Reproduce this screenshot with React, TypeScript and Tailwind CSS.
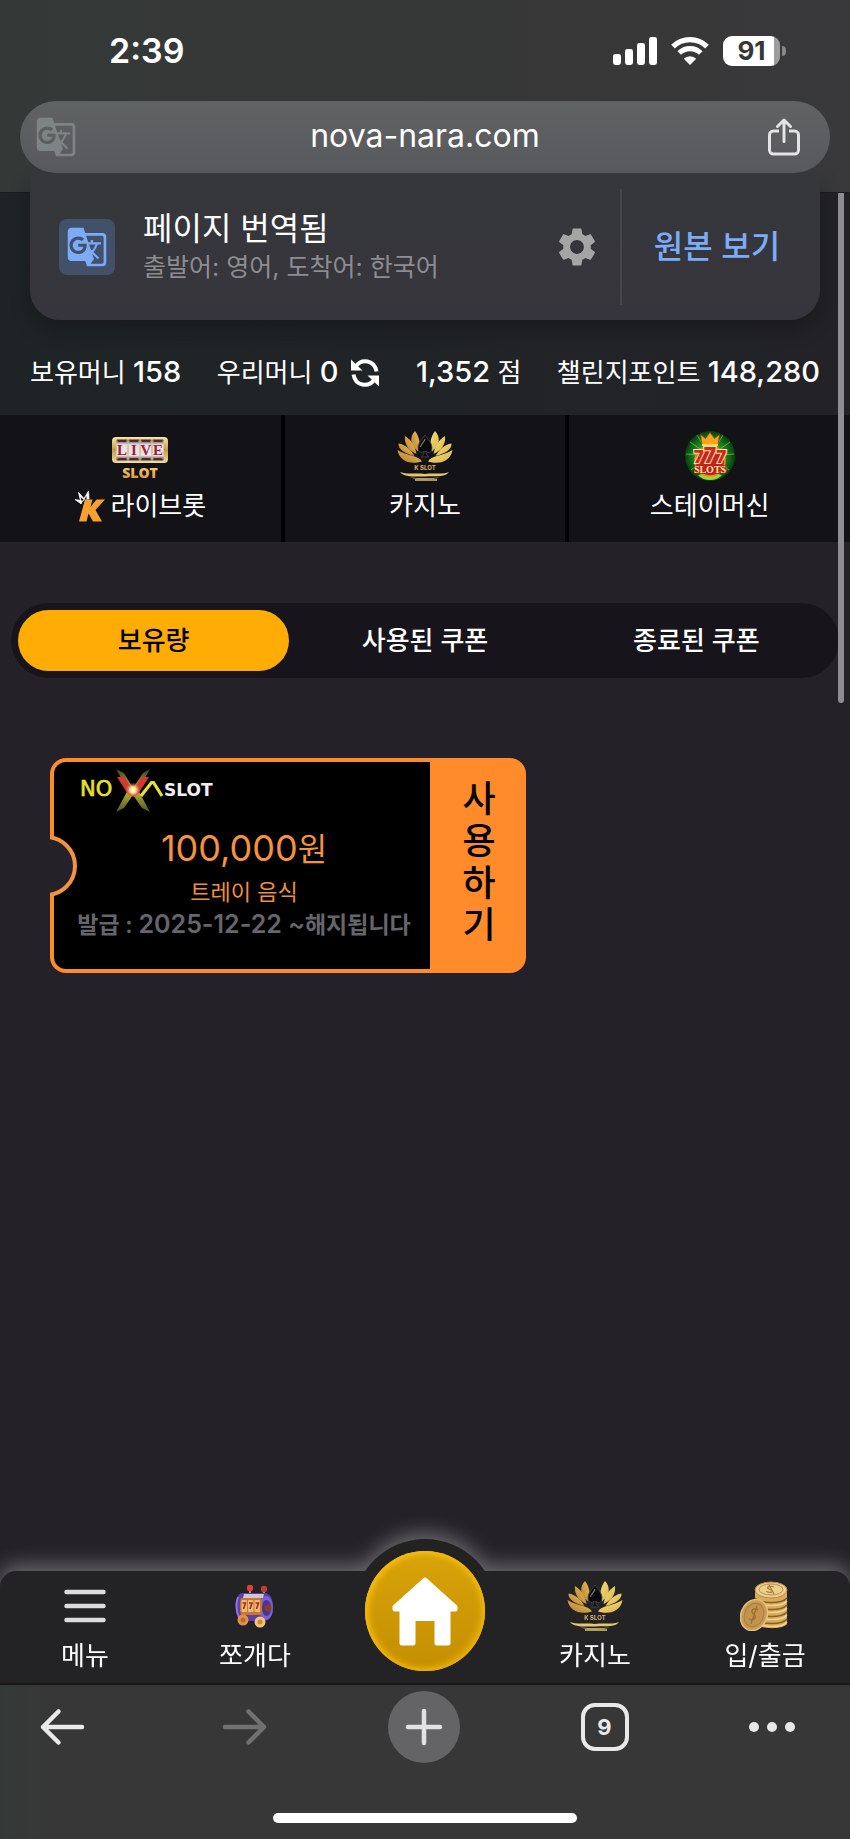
import { useId, useState } from 'react';
import type { ReactNode } from 'react';
import { MdGTranslate, MdSettings } from 'react-icons/md';

function SignalIcon() {
  return (
    <svg width="44" height="28" viewBox="0 0 44 28" fill="#fff" aria-hidden="true">
      <rect x="0" y="17" width="8" height="11" rx="2.4" />
      <rect x="12" y="12" width="8" height="16" rx="2.4" />
      <rect x="24" y="6" width="8" height="22" rx="2.4" />
      <rect x="36" y="0" width="8" height="28" rx="2.4" />
    </svg>
  );
}

function WifiIcon() {
  return (
    <svg width="38" height="28" viewBox="0 0 38 28" fill="none" stroke="#fff" strokeWidth="5.2" aria-hidden="true">
      <path d="M2 9.6a24.2 24.2 0 0 1 34 0" />
      <path d="M8.2 16a15.4 15.4 0 0 1 21.6 0" />
      <path d="M19 28l-6.2-6.3a8.8 8.8 0 0 1 12.4 0z" fill="#fff" stroke="none" />
    </svg>
  );
}

function ShareIcon() {
  return (
    <svg width="32" height="38" viewBox="0 0 32 38" fill="none" stroke="#e4e4e5" strokeWidth="3" strokeLinecap="round" strokeLinejoin="round" aria-hidden="true">
      <path d="M11 13H5.500a4 4 0 0 0-4 4v15a4 4 0 0 0 4 4h21a4 4 0 0 0 4-4V17a4 4 0 0 0-4-4H21" strokeLinecap="butt" />
      <path d="M16 23.500V2.500M9.500 8.500L16 2l6.500 6.500" />
    </svg>
  );
}

function RefreshIcon() {
  return (
    <svg width="30" height="28" viewBox="0 0 30 28" fill="none" stroke="#fff" strokeWidth="4" aria-hidden="true">
      <path d="M6 7C11.500-.5 24.500.5 26.500 12.500" />
      <path d="M24 21C18.500 28.500 5.500 27.500 3.500 15.500" />
      <path d="M1 .5V11.500h11.500z" fill="#fff" stroke="none" />
      <path d="M29 27.500V16.500H17.500z" fill="#fff" stroke="none" />
    </svg>
  );
}

function LotusIcon() {
  const id = useId();
  const petals = (
    <>
      <path d="M38 0c5.500 6 5.500 13-3 20.500-3-7-1.500-14.500 3-20.500z" />
      <path d="M48 5c1 8-3.500 14.500-11.500 18C38 15 42 8.500 48 5z" />
      <path d="M54.500 12.500c.5 5.500-6 10-16 12.500 3.500-6.500 9-11.500 16-12.500z" />
      <path d="M55.500 19C54 29 44 34.500 31 30.500 34 24.500 46 25 55.500 19z" />
    </>
  );
  return (
    <svg width="56" height="50" viewBox="0 0 56 50" aria-hidden="true">
      <defs>
        <linearGradient id={`${id}l`} x1="0" y1="0" x2="1" y2="1">
          <stop offset="0" stopColor="#f3dc7a" />
          <stop offset="1" stopColor="#dcb54a" />
        </linearGradient>
        <linearGradient id={`${id}d`} x1="0" y1="0" x2="1" y2="1">
          <stop offset="0" stopColor="#eac05c" />
          <stop offset="1" stopColor="#b47d2c" />
        </linearGradient>
      </defs>
      <g fill={`url(#${id}l)`}>{petals}</g>
      <g fill={`url(#${id}d)`} transform="matrix(-1 0 0 1 56 0)">{petals}</g>
      <path d="M28 4c3 5 7 7.500 7 13 0 5-4.500 5.500-6.200 3 .2 3 1.200 4.500 2.800 6h-7.200c1.600-1.500 2.600-3 2.800-6-1.700 2.500-6.200 2-6.200-3C21 11.500 25 9 28 4z" fill="#0b0b0e" stroke="#4b4b52" strokeWidth=".8" />
      <path d="M28 8c-1 4-4.500 5-4.500 8" fill="none" stroke="#77777f" strokeWidth="1.200" />
      <text x="28" y="39" textAnchor="middle" fontSize="6" fontWeight="700" fill="#e0b56a" className="font-['Inter',sans-serif]">K SLOT</text>
      <path d="M3 41c8 3 14 .5 25 2 10-1.500 17 1 24-2-3 5-12 4-24 4.500C15 45.500 7 46 3 41z" fill="#e6c86c" />
      <path d="M13 46.500c9 1 21 1 30 0-8 2-21 2.500-30 0z" fill="#e6c86c" />
      <path d="M18 49h22" stroke="#f2e08d" strokeWidth="1.300" />
    </svg>
  );
}

function LiveSlotIcon() {
  return (
    <svg width="56" height="54" viewBox="0 -8 56 54" aria-hidden="true">
      <defs>
        <linearGradient id="liveGold" x1="0" y1="0" x2="0" y2="1">
          <stop offset="0" stopColor="#f7e9a5" />
          <stop offset=".5" stopColor="#c69a45" />
          <stop offset="1" stopColor="#efe09a" />
        </linearGradient>
        <linearGradient id="liveReel" x1="0" y1="0" x2="0" y2="1">
          <stop offset="0" stopColor="#3a3537" />
          <stop offset=".25" stopColor="#e6e0e2" />
          <stop offset=".75" stopColor="#ece6e8" />
          <stop offset="1" stopColor="#3a3537" />
        </linearGradient>
        <linearGradient id="slotGold" x1="0" y1="0" x2="0" y2="1">
          <stop offset="0" stopColor="#fbe27e" />
          <stop offset="1" stopColor="#dc8b38" />
        </linearGradient>
      </defs>
      <rect width="56" height="26" rx="4" fill="url(#liveGold)" />
      {['L', 'I', 'V', 'E'].map((letter, i) => (
        <g key={letter}>
          <rect x={4.5 + i * 12} y="2.500" width="11" height="21" fill="url(#liveReel)" />
          <path d={`M${6 + i * 12} 4h8M${6 + i * 12} 22h8`} stroke="#5a2633" strokeWidth="2" />
          <text x={10 + i * 12} y="18" textAnchor="middle" fontSize="15" fontWeight="700" fill="#96213f" className="font-['Liberation_Serif',serif]">{letter}</text>
        </g>
      ))}
      <text x="28" y="41" textAnchor="middle" fontSize="14" fontWeight="800" fill="url(#slotGold)" className="font-['Open_Sans',sans-serif]">SLOT</text>
    </svg>
  );
}

function SevensIcon() {
  return (
    <svg width="52" height="52" viewBox="0 0 52 52" aria-hidden="true">
      <defs>
        <radialGradient id="greenBall">
          <stop offset="0" stopColor="#b6e34a" />
          <stop offset=".55" stopColor="#1f9024" />
          <stop offset="1" stopColor="#06400f" />
        </radialGradient>
      </defs>
      <circle cx="26" cy="26" r="25" fill="url(#greenBall)" />
      <g stroke="#7fd23f" strokeWidth="1" opacity=".7">
        <path d="M26 26L6 12M26 26L2 24M26 26L46 12M26 26L50 24M26 26L13 5M26 26L39 5M26 26L7 40M26 26L45 40" />
      </g>
      <path d="M14 45q12-4 24 0-4 5-12 5t-12-5z" fill="#9ad63a" />
      <circle cx="26" cy="31" r="15" fill="#c0261a" stroke="#f08a24" strokeWidth="1.500" />
      <path d="M18 15L16.500 4.500l5 4L26 2.500l4.500 6 5-4L34 15z" fill="#f6a51d" stroke="#8d4a08" strokeWidth=".8" />
      <path d="M18 15h16" stroke="#ffd84c" strokeWidth="2" />
      <text x="26" y="33" textAnchor="middle" fontSize="17" fontWeight="900" fill="#d5281c" stroke="#ffe9b0" strokeWidth="2" paintOrder="stroke" className="font-['Inter',sans-serif]">
        7<tspan fontSize="21">7</tspan>7
      </text>
      <text x="26" y="43" textAnchor="middle" fontSize="10" fontWeight="700" fill="#ffe7a6" stroke="#b01f14" strokeWidth="1.600" paintOrder="stroke" className="font-['Liberation_Serif',serif]">SLOTS</text>
    </svg>
  );
}

function CrownKIcon() {
  return (
    <svg width="32" height="32" viewBox="0 0 32 32" aria-hidden="true">
      <path d="M11 9.500h7.500L16.500 17 22.500 9.500H31L21.500 20 28 31.500h-9l-4.500-8-2 8H5z" fill="#f6a02d" />
      <path d="M6 13L1 9.500l5.500 1L4.500 2.500l5.500 6L14.500 1l.5 8c-3.500-.5-6.500 1-8 5z" fill="#fff" stroke="#fff" strokeWidth=".8" strokeLinejoin="round" />
      <path d="M7.500 11l-1-4 3.500 3 2.500-4 .2 3.200C10.500 9 9 10 7.500 11z" fill="#131217" />
    </svg>
  );
}

function SlotMachineIcon() {
  return (
    <svg width="40" height="44" viewBox="0 0 40 44" aria-hidden="true">
      <path d="M15 5v7M29 6v7" stroke="#b58b86" strokeWidth="2" />
      <circle cx="15" cy="4" r="3.200" fill="#d6452e" />
      <circle cx="29" cy="5" r="3.200" fill="#c23c2a" />
      <path d="M7 9h22c7 0 9 7 9 14s-3 14-10 14H8c-5 0-7-7-7-14S3 9 7 9z" fill="#5a3fae" />
      <ellipse cx="31" cy="24" rx="7" ry="12" fill="#7a60d6" />
      <ellipse cx="31.500" cy="24" rx="4.500" ry="8" fill="#4b3391" />
      <path d="M9 10h20l-1 4H8z" fill="#cfc7d8" />
      <path d="M6 14h20c1.500 4 1.500 12 0 17H6c-1.500-5-1.500-13 0-17z" fill="#c9762f" />
      <g fill="#eeb878">
        <rect x="6.500" y="16" width="5.500" height="12" rx="1" />
        <rect x="13" y="16" width="5.500" height="12" rx="1" />
        <rect x="19.500" y="16" width="5.500" height="12" rx="1" />
      </g>
      <path d="M7.500 19h3l-2 6M14 19h3l-2 6M20.500 19h3l-2 6" stroke="#a3301f" strokeWidth="1.600" fill="none" />
      <path d="M3 13c-2 6-2 14 1 20" stroke="#8c76ea" strokeWidth="2" fill="none" />
      <circle cx="33" cy="24" r="3.500" fill="#8e3b1e" />
      <circle cx="8" cy="36" r="5.500" fill="#e09348" />
      <circle cx="8" cy="36" r="2.500" fill="#b96b2d" />
      <circle cx="25" cy="38" r="5.500" fill="#f1c477" />
      <circle cx="25" cy="38" r="2.500" fill="#c98a3c" />
    </svg>
  );
}

function CoinsIcon() {
  return (
    <svg width="50" height="50" viewBox="0 0 50 50" aria-hidden="true">
      <path d="M15 9v34c4 5 28 6 32 0V9z" fill="#d8ac5c" />
      <path d="M15 17c5 6 27 6 32 0M16 24c5 6 26 6 31 0M16 31c5 6 26 6 31 0M17 38c5 6 25 6 30 0" fill="none" stroke="#87602a" strokeWidth="1.500" />
      <path d="M15 20c5 6 27 6 32 0M16 27c5 6 26 6 31 0M16 34c5 6 26 6 31 0M17 41c5 6 25 6 30 0" fill="none" stroke="#f3d795" strokeWidth="1.200" />
      <ellipse cx="31" cy="9" rx="16" ry="8" fill="#edcf8c" stroke="#b58a44" />
      <ellipse cx="31" cy="8.500" rx="12" ry="5.500" fill="none" stroke="#b98f4a" />
      <path d="M34 6c-6-2-9 1-4 2.500s2 4-4 2M29 4l5 9" fill="none" stroke="#a67c39" strokeWidth="1.200" />
      <ellipse cx="14" cy="34" rx="13" ry="16" transform="rotate(24 14 34)" fill="#c99b57" stroke="#e3c07d" strokeWidth="1.500" />
      <ellipse cx="14" cy="34" rx="9.500" ry="12" transform="rotate(24 14 34)" fill="#c4944f" stroke="#a87c3c" />
      <path d="M18 29c-5-3-8 1-4.500 4s1 8-4.500 4.500M17 25l-6 18" fill="none" stroke="#98702f" strokeWidth="1.300" />
    </svg>
  );
}

function HomeIcon() {
  return (
    <svg width="68" height="70" viewBox="0 0 68 70" fill="#fff" aria-hidden="true">
      <path d="M34 4L4 31v2h7v34h11V42.500h24V67h11V33h7v-2z" stroke="#fff" strokeWidth="5" strokeLinejoin="round" />
    </svg>
  );
}

function NovaLogo() {
  return (
    <svg width="138" height="46" viewBox="-2 0 138 46" role="img" aria-label="NOVA SLOT">
      <defs>
        <linearGradient id="ray" x1="0" y1="0" x2="0" y2="1">
          <stop offset="0" stopColor="#3c4024" />
          <stop offset=".5" stopColor="#b9bf35" />
          <stop offset="1" stopColor="#4d5226" />
        </linearGradient>
        <radialGradient id="burst">
          <stop offset="0" stopColor="#fff" />
          <stop offset=".4" stopColor="#fbe08a" />
          <stop offset="1" stopColor="#d8372e" stopOpacity="0" />
        </radialGradient>
      </defs>
      <path d="M34 1l8 4 9 15L61 5l7-4-12 21 12 22-8-4-9-13-9 13-8 4 12-22z" fill="url(#ray)" />
      <path d="M35 9h7l9 13 9-13h7L56 26q-5 5-10 0z" fill="#d8372e" />
      <circle cx="51" cy="22" r="8" fill="url(#burst)" />
      <text x="-2" y="28" fontSize="21" fill="#e6e02f" stroke="#e6e02f" strokeWidth=".7" className="font-['DejaVu_Sans',sans-serif]">NO</text>
      <path d="M59 28l10.500-13.500h2L80 28" fill="none" stroke="#e6e02f" strokeWidth="3.200" />
      <text x="82" y="28" fontSize="17" fontWeight="700" fill="#f1f1f3" className="font-['DejaVu_Sans',sans-serif]">SLOT</text>
    </svg>
  );
}

const games: { label: string; icon: ReactNode; mark?: ReactNode }[] = [
  { label: '라이브롯', icon: <LiveSlotIcon />, mark: <CrownKIcon /> },
  { label: '카지노', icon: <LotusIcon /> },
  { label: '스테이머신', icon: <SevensIcon /> },
];

const tabs = ['보유량', '사용된 쿠폰', '종료된 쿠폰'];

function NavItem({ label, children }: { label: string; children: ReactNode }) {
  return (
    <a href="#" className="flex flex-col items-center pt-2 text-[26px] leading-9 text-white">
      <span className="flex h-[54px] items-center justify-center">{children}</span>
      <span className="mt-[5px]">{label}</span>
    </a>
  );
}

export default function App() {
  const [activeTab, setActiveTab] = useState(0);

  return (
    <div
      lang="ko"
      className="relative flex min-h-screen flex-col bg-[#242228] font-['Inter','Noto_Sans_CJK_KR',sans-serif] text-white"
    >
      {/* Browser top */}
      <header className="relative z-10 h-[193px] border-b border-[#1b1d1f] bg-linear-to-r from-[#343937] via-[#363737] to-[#39383a]">
        <div className="flex h-[101px] items-center justify-between pr-[64px] pl-[109px]">
          <span className="text-[34px] leading-10 font-semibold">2:39</span>
          <div className="flex items-center gap-[14px]">
            <SignalIcon />
            <WifiIcon />
            <div className="flex items-center gap-[2px]">
              <span className="flex h-[30px] w-[57px] items-center justify-center rounded-[9px] bg-linear-to-r from-white from-90% to-[#9c9c9c] to-90% text-[26px] font-bold text-[#363838]">
                91
              </span>
              <span className="h-[10px] w-[4px] rounded-r-full bg-[#858686]" />
            </div>
          </div>
        </div>

        <div className="relative z-10 mx-5 flex h-[72px] items-center rounded-full bg-linear-to-b from-[#616264] to-[#58595c] pr-[30px] pl-[15px]">
          <button type="button" aria-label="번역" className="w-[47px] text-[#7d8483]">
            <MdGTranslate size={42} />
          </button>
          <input
            aria-label="주소"
            defaultValue="nova-nara.com"
            className="h-full min-w-0 flex-1 bg-transparent pb-1 text-center text-[32px] text-white outline-none"
          />
          <button type="button" aria-label="공유">
            <ShareIcon />
          </button>
        </div>

        {/* Translate banner */}
        <section className="mx-[30px] flex h-[147px] items-center rounded-b-[30px] bg-linear-to-b from-[#35373a] to-[#36353d] shadow-[0_10px_20px_rgba(0,0,0,0.25)]">
          <span className="ml-[29px] flex size-14 items-center justify-center rounded-lg bg-[#425169] text-[#7cacf8]">
            <MdGTranslate size={42} />
          </span>
          <div className="ml-7 flex-1">
            <p className="text-[32px] leading-10">페이지 번역됨</p>
            <p className="text-[25px] leading-9 text-[#8d8d91]">출발어: 영어, 도착어: 한국어</p>
          </div>
          <button type="button" aria-label="설정" className="mr-5 text-[#a5a5a8]">
            <MdSettings size={46} />
          </button>
          <button type="button" className="h-[116px] w-[200px] border-l-2 border-[#47484c] pr-2 text-center text-[32px] font-medium text-[#7cacf8]">
            원본 보기
          </button>
        </section>
      </header>

      {/* Balances */}
      <section className="flex h-[222px] items-end justify-between bg-linear-to-r from-[#1e2426] to-[#232327] px-[30px] pb-[22px] text-[26px] leading-10">
        <p>보유머니 <span className="text-[29px] font-medium">158</span></p>
        <p className="flex items-center gap-3">
          <span>우리머니 <span className="text-[29px] font-medium">0</span></span>
          <button type="button" aria-label="새로고침"><RefreshIcon /></button>
        </p>
        <p><span className="text-[29px] font-medium">1,352</span> 점</p>
        <p>챌린지포인트 <span className="text-[29px] font-medium">148,280</span></p>
      </section>

      <nav className="grid h-[127px] grid-cols-3 gap-1 bg-black">
        {games.map((game) => (
          <a key={game.label} href="#" className="flex flex-col items-center bg-[#131217] pt-[14px] text-[26px] leading-9">
            <span className="flex h-[54px] items-center justify-center">{game.icon}</span>
            <span className="mt-[5px] flex items-center gap-1">
              {game.mark}
              {game.label}
            </span>
          </a>
        ))}
      </nav>

      <main className="flex-1 pt-[61px]">
        <div role="tablist" className="mx-[11px] grid grid-cols-3 rounded-full bg-[#17151b] p-[7px]">
          {tabs.map((tab, i) => (
            <button
              key={tab}
              type="button"
              role="tab"
              aria-selected={activeTab === i}
              onClick={() => setActiveTab(i)}
              className={
                activeTab === i
                  ? 'h-[61px] rounded-full bg-[#ffad05] text-[26px] font-medium text-black'
                  : 'h-[61px] rounded-full text-[26px] font-medium text-white'
              }
            >
              {tab}
            </button>
          ))}
        </div>

        {/* Coupon */}
        <article className="relative mt-[80px] ml-[50px] flex h-[215px] w-[476px] overflow-hidden rounded-2xl bg-[#ff8b2b] p-1">
          <div className="flex w-[376px] flex-col items-center rounded-l-xl bg-black pl-1">
            <div className="mt-[6px] ml-[22px] self-start">
              <NovaLogo />
            </div>
            <p className="mt-[14px] text-[32px] leading-10 text-[#f3923f]">
              <span className="text-[36px]">100,000</span>원
            </p>
            <p className="mt-[6px] text-[22px] leading-8 text-[#ef8f3f]">트레이 음식</p>
            <p className="text-[23px] leading-8 font-semibold whitespace-nowrap text-[#66656c]">
              발급 : <span className="text-[25px]">2025-12-22 ~</span>해지됩니다
            </p>
          </div>
          <button type="button" className="flex flex-1 items-center justify-center pb-2 pl-[6px] text-[36px] leading-[42px] font-medium text-black">
            <span className="w-[36px] break-all">사용하기</span>
          </button>
          <span className="absolute top-[77px] -left-[35px] size-[62px] rounded-full border-4 border-[#f3923f] bg-[#242228]" />
        </article>
      </main>

      {/* Site navigation */}
      <nav className="relative h-[112px] drop-shadow-[0_-6px_10px_rgba(255,255,255,0.32)]">
        <span className="absolute -top-8 left-1/2 size-36 -translate-x-1/2 rounded-full bg-[#222223]" />
        <div className="relative grid h-full grid-cols-5 rounded-t-2xl bg-[#232224]">
          <NavItem label="메뉴">
            <svg width="42" height="34" viewBox="0 0 42 34" stroke="#dcdcdc" strokeWidth="4.500" strokeLinecap="round" aria-hidden="true">
              <path d="M2.500 3h37M2.500 17h37M2.500 31h37" />
            </svg>
          </NavItem>
          <NavItem label="쪼개다"><SlotMachineIcon /></NavItem>
          <div className="relative">
            <a
              href="#"
              aria-label="홈"
              className="absolute -top-5 left-1/2 flex size-[120px] -translate-x-1/2 items-center justify-center rounded-full bg-linear-to-b from-[#d9a30a] to-[#c48f02] shadow-[inset_0_3px_6px_#f5bd12,inset_4px_0_6px_#f0b50c,inset_-4px_-3px_6px_#e3ac0a]"
            >
              <HomeIcon />
            </a>
          </div>
          <NavItem label="카지노"><LotusIcon /></NavItem>
          <NavItem label="입/출금"><CoinsIcon /></NavItem>
        </div>
      </nav>

      {/* Browser toolbar */}
      <footer className="relative h-[156px] border-t-2 border-[#19191a] bg-linear-to-r from-[#343937] via-[#373738] via-5% to-[#373738]">
        <div className="flex items-center justify-between pt-[6px] pr-[55px] pl-[39px]">
          <button type="button" aria-label="뒤로" className="mr-3">
            <svg width="48" height="40" viewBox="0 0 48 40" fill="none" stroke="#e9e9ea" strokeWidth="4.500" strokeLinecap="round" strokeLinejoin="round">
              <path d="M43 20H4M19.500 4.500L4 20l15.500 15.500" />
            </svg>
          </button>
          <button type="button" aria-label="앞으로" disabled>
            <svg width="48" height="40" viewBox="0 0 48 40" fill="none" stroke="#717172" strokeWidth="4.500" strokeLinecap="round" strokeLinejoin="round">
              <path d="M5 20h39M28.500 4.500L44 20 28.500 35.500" />
            </svg>
          </button>
          <button type="button" aria-label="새 탭" className="flex size-[72px] items-center justify-center rounded-full bg-[#646466]">
            <svg width="38" height="38" viewBox="0 0 38 38" stroke="#e2e2e3" strokeWidth="4.500" strokeLinecap="round">
              <path d="M19 3v32M3 19h32" />
            </svg>
          </button>
          <button type="button" className="flex size-12 items-center justify-center rounded-[14px] border-4 border-[#e9e9ea] text-[22px] font-bold text-[#e9e9ea]">
            9
          </button>
          <button type="button" aria-label="더보기">
            <svg width="46" height="10" viewBox="0 0 46 10" fill="#e9e9ea">
              <circle cx="5" cy="5" r="5" />
              <circle cx="23" cy="5" r="5" />
              <circle cx="41" cy="5" r="5" />
            </svg>
          </button>
        </div>
        <div className="mx-auto mt-[50px] h-[10px] w-[304px] rounded-full bg-white" />
      </footer>

      {/* Scrollbar thumb */}
      <span className="absolute top-[193px] right-[6px] h-[510px] w-[6px] rounded-b-full bg-[#8e8d93]" />
    </div>
  );
}
